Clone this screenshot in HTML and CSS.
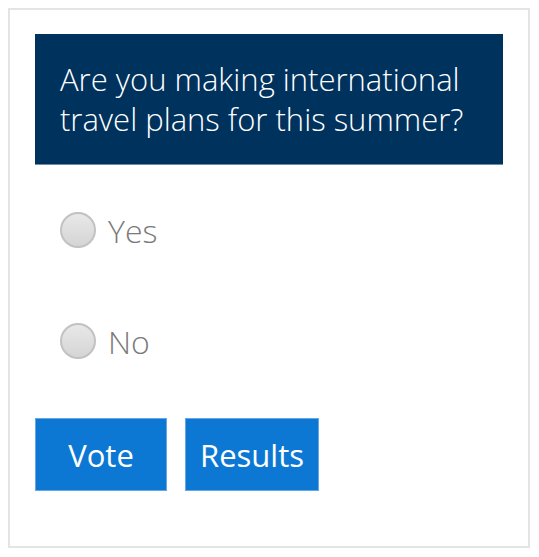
FILE: index.html
```html
<!DOCTYPE html>
<html>
<head>
<meta charset="utf-8">
<link rel="stylesheet" href="styles.css">
</head>
<body>
<div class="poll">
  <div class="question">Are you making international travel plans for this summer?</div>
  <div class="options">
    <label class="option"><span class="radio"></span><span class="label">Yes</span></label>
    <label class="option"><span class="radio"></span><span class="label">No</span></label>
  </div>
  <div class="actions">
    <button class="btn btn-vote">Vote</button>
    <button class="btn btn-results">Results</button>
  </div>
</div>
</body>
</html>
```
FILE: styles.css
```css
html, body { margin: 0; padding: 0; background: #fff; }
body { padding: 8px; font-family: "Open Sans", "Liberation Sans", sans-serif; }
.poll {
  width: 468px;
  border: 2px solid #e4e4e4;
  padding: 24px 25px 25px 25px;
}
.question {
  background: #00325e;
  color: #fff;
  font-size: 31px;
  font-weight: 300;
  line-height: 40px;
  padding: 25px 25px;
  height: 80px;
  border-bottom: 1px solid #6d8cab;
}
.options {
  display: flex;
  flex-direction: column;
  gap: 75px;
  margin-top: 47px;
}
.option {
  display: flex;
  align-items: center;
  gap: 12px;
  height: 36px;
  padding-left: 25px;
}
.radio {
  width: 32px;
  height: 32px;
  border-radius: 50%;
  border: 2px solid #c2c2c2;
  background: linear-gradient(#e8e8e8, #d5d5d5);
  box-sizing: content-box;
  flex: none;
}
.label {
  font-size: 32px;
  font-weight: 300;
  color: #7a7a7a;
}
.actions {
  display: flex;
  gap: 18px;
  margin-top: 59px;
  margin-bottom: 30px;
}
.btn {
  height: 73px;
  background: #0c78d4;
  border: 1px solid #64a9e6;
  color: #fff;
  font-family: "Open Sans", "Liberation Sans", sans-serif;
  font-size: 31px;
  padding: 0;
  margin: 0;
}
.btn-vote { width: 132px; }
.btn-results { width: 134px; }
```
